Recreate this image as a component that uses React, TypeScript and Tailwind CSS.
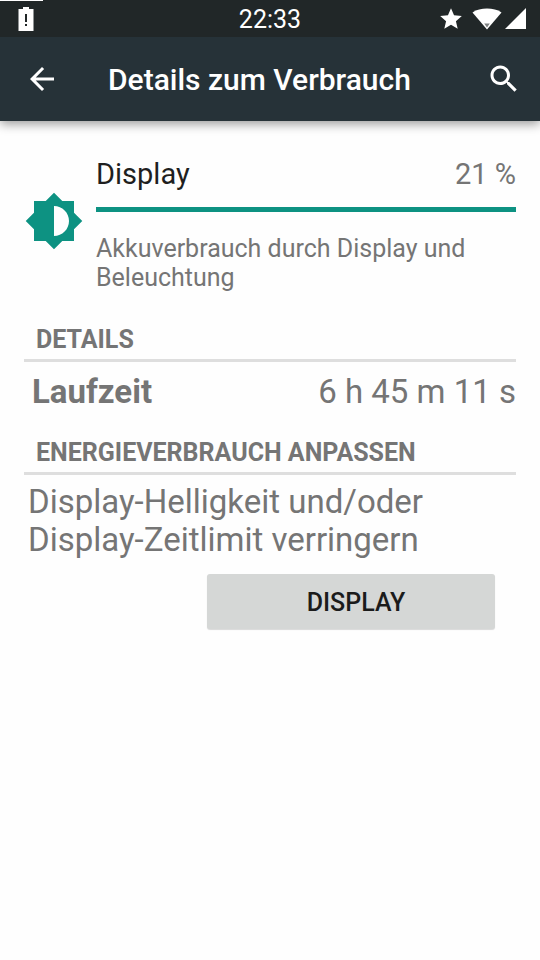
import type { ReactNode } from "react";

interface SectionProps {
  title: string;
  children: ReactNode;
}

const BatteryAlertIcon = () => (
  <svg viewBox="0 0 16 24" className="h-6 w-4" fill="currentColor" aria-hidden="true">
    <path
      fillRule="evenodd"
      d="M5 0h6v2h4.500v22H.5V2H5zM7 7v8h2V7zM7 17v2h2v-2z"
    />
  </svg>
);

const StarIcon = () => (
  <svg viewBox="0 0 24 24" className="size-[26px]" fill="currentColor" aria-hidden="true">
    <path d="M12 17.27L18.18 21l-1.64-7.030L22 9.240l-7.190-.61L12 2 9.190 8.630 2 9.240l5.460 4.730L5.820 21z" />
  </svg>
);

const WifiIcon = () => (
  <svg viewBox="0 0 30 22" className="h-[22px] w-[30px]" aria-hidden="true">
    <path d="M15 21.500L.5 4.500C4.500 1.500 9.500.5 15 .5s10.500 1 14.500 4z" fill="currentColor" />
    <path d="M12.200 15.500h5.600L15 19.500z" fill="#7d8081" />
  </svg>
);

const SignalIcon = () => (
  <svg viewBox="0 0 21 21" className="size-[21px]" fill="currentColor" aria-hidden="true">
    <path d="M0 21L21 0v21z" />
  </svg>
);

const ArrowBackIcon = () => (
  <svg viewBox="0 0 24 24" className="size-9" fill="currentColor" aria-hidden="true">
    <path d="M20 11H7.830l5.590-5.590L12 4l-8 8 8 8 1.410-1.410L7.830 13H20v-2z" />
  </svg>
);

const SearchIcon = () => (
  <svg viewBox="0 0 24 24" className="size-9" fill="currentColor" aria-hidden="true">
    <path d="M15.500 14h-.79l-.28-.27C15.410 12.590 16 11.110 16 9.500 16 5.910 13.090 3 9.500 3S3 5.910 3 9.500 5.910 16 9.500 16c1.610 0 3.090-.59 4.230-1.570l.27.28v.79l5 4.990L20.490 19l-4.990-5zm-6 0C7.010 14 5 11.990 5 9.500S7.010 5 9.500 5 14 7.010 14 9.500 11.990 14 9.500 14z" />
  </svg>
);

const BrightnessIcon = () => (
  <svg viewBox="0 0 24 24" className="size-[60px] shrink-0" fill="currentColor" aria-hidden="true">
    <path d="M20 15.310L23.310 12 20 8.690V4h-4.690L12 .69 8.690 4H4v4.690L.69 12 4 15.310V20h4.690L12 23.310 15.310 20H20v-4.690zM12 18V6c3.310 0 6 2.690 6 6s-2.690 6-6 6z" />
  </svg>
);

const StatusBar = () => (
  <div className="relative grid h-[37px] grid-cols-3 items-center bg-[#212728] px-3.5 text-white">
    <div className="absolute top-0 left-0 h-px w-[43px] bg-white" />
    <div className="pl-1">
      <BatteryAlertIcon />
    </div>
    <span className="pt-0.5 text-center text-[25px] leading-[30px]">22:33</span>
    <div className="flex items-center justify-end">
      <StarIcon />
      <div className="ml-2 flex items-center gap-[3px]">
        <WifiIcon />
        <SignalIcon />
      </div>
    </div>
  </div>
);

const Section = ({ title, children }: SectionProps) => (
  <section>
    <h2 className="border-b-3 border-[#dedede] pb-1 pl-3 text-[25px] leading-[30px] font-bold uppercase">
      {title}
    </h2>
    {children}
  </section>
);

export const App = () => (
  <div className="min-h-screen bg-[#fefefe] font-[Roboto,sans-serif] text-[#757575]">
    <StatusBar />
    <header className="flex h-[84px] items-center bg-[#263238] px-[18px] text-white shadow-[0_3px_10px_rgba(0,0,0,0.4)]">
      <button type="button" aria-label="Zurück" className="ml-1.5">
        <ArrowBackIcon />
      </button>
      <h1 className="ml-12 flex-1 pt-0.5 text-[30px] leading-9 font-medium">
        Details zum Verbrauch
      </h1>
      <button type="button" aria-label="Suchen">
        <SearchIcon />
      </button>
    </header>

    <main className="px-6 pt-[29px]">
      <div className="flex items-center gap-3">
        <span className="text-[#0d9282]">
          <BrightnessIcon />
        </span>
        <div className="flex-1 pt-1.5">
          <div className="flex justify-between text-[29px] leading-9">
            <span className="text-[#1f1f1f]">Display</span>
            <span>21 %</span>
          </div>
          <div className="mt-[15px] h-[5px] bg-[#0d9282]" />
          <p className="mt-[22px] text-[25px] leading-[29px]">
            Akkuverbrauch durch Display und Beleuchtung
          </p>
        </div>
      </div>

      <div className="mt-[33px] flex flex-col gap-[27px]">
        <Section title="Details">
          <dl className="mt-[11px] flex justify-between text-[33px] leading-[38px]">
            <dt className="pl-2 font-bold">Laufzeit</dt>
            <dd>6 h 45 m 11 s</dd>
          </dl>
        </Section>

        <Section title="Energieverbrauch anpassen">
          <p className="mt-2 px-1 text-[33px] leading-[38px]">
            Display-Helligkeit und/oder Display-Zeitlimit verringern
          </p>
          <div className="mt-[15px] flex justify-end pr-[21px]">
            <button
              type="button"
              className="h-[55px] w-[288px] rounded-[3px] bg-[#d5d7d6] pt-0.5 pl-2.5 text-[25px] font-medium text-[#1b1b1b] uppercase shadow-[0_1px_1px_rgba(0,0,0,0.15)]"
            >
              Display
            </button>
          </div>
        </Section>
      </div>
    </main>
  </div>
);

export default App;
